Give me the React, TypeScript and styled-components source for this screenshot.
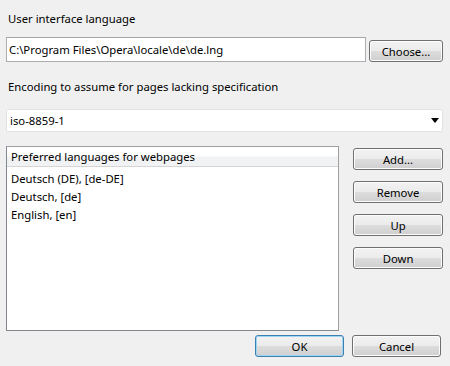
import React from "react";
import styled, { createGlobalStyle } from "styled-components";

const Global = createGlobalStyle`
  html, body { margin: 0; padding: 0; background: #f0f0f0; }
  * { box-sizing: border-box; }
`;

const Dialog = styled.div`
  width: 450px;
  height: 366px;
  background: #f0f0f0;
  padding: 11px 7px 0 6px;
  font-family: "Segoe UI", "Noto Sans", "Open Sans", sans-serif;
  font-size: 11.3px;
  color: #000;
  display: flex;
  flex-direction: column;
  overflow: hidden;
`;

const Caption = styled.div<{ $gap: number }>`
  height: 16px;
  line-height: 16px;
  padding-left: 2px;
  margin-bottom: ${(p) => p.$gap}px;
`;

const Row = styled.div<{ $gap?: number }>`
  display: flex;
  align-items: flex-start;
  margin-bottom: ${(p) => p.$gap ?? 0}px;
`;

const TextField = styled.div`
  flex: 1;
  height: 25px;
  background: #fff;
  border: 1px solid #abadb3;
  border-top-color: #a3a5aa;
  padding: 0 3px 0 2px;
  line-height: 23px;
  white-space: nowrap;
  overflow: hidden;
`;

const Button = styled.button<{ $w: number; $default?: boolean }>`
  width: ${(p) => p.$w}px;
  height: 22px;
  padding: 0;
  font: inherit;
  color: #000;
  border-radius: 3px;
  border: 1px solid ${(p) => (p.$default ? "#3c7fb1" : "#707070")};
  background: linear-gradient(#f2f2f2 0%, #ebebeb 50%, #dddddd 51%, #cfcfcf 100%);
  box-shadow: inset 0 0 0 1px ${(p) => (p.$default ? "#9fd6f4" : "#fcfcfc")};
  line-height: 19px;
`;

const ChooseBtn = styled(Button)`
  margin-left: 3px;
  margin-top: 3px;
`;

const Select = styled.div`
  height: 23px;
  background: #fff;
  border: 1px solid #e3e3e3;
  border-radius: 2px;
  display: flex;
  align-items: center;
  justify-content: space-between;
  padding: 0 3px 0 3px;
  margin-bottom: 14px;
`;

const Arrow = styled.span`
  width: 0;
  height: 0;
  border-left: 4px solid transparent;
  border-right: 4px solid transparent;
  border-top: 5px solid #000;
`;

const ListBox = styled.div`
  width: 333px;
  height: 185px;
  background: #fff;
  border: 1px solid #828790;
  border-top-color: #a0a0a0;
  border-right-color: #a0a0a0;
`;

const ListHeader = styled.div`
  height: 20px;
  line-height: 19px;
  padding-left: 4px;
  background: linear-gradient(#ffffff 0%, #ffffff 45%, #f1f2f4 55%, #f1f2f4 100%);
  border-bottom: 1px solid #d5d5d5;
  margin-bottom: 3px;
`;

const ListItem = styled.div`
  height: 18px;
  line-height: 18px;
  padding-left: 4px;
`;

const SideButtons = styled.div`
  display: flex;
  flex-direction: column;
  gap: 11px;
  margin-left: 14px;
  margin-top: 2px;
`;

const Footer = styled.div`
  display: flex;
  justify-content: flex-end;
  gap: 8px;
  padding-right: 2px;
  margin-top: 4px;
`;

export default function App() {
  return (
    <>
      <Global />
      <Dialog>
        <Caption $gap={10}>User interface language</Caption>
        <Row $gap={17}>
          <TextField>C:\Program Files\Opera\locale\de\de.lng</TextField>
          <ChooseBtn $w={74}>Choose...</ChooseBtn>
        </Row>
        <Caption $gap={14}>Encoding to assume for pages lacking specification</Caption>
        <Select>
          <span>iso-8859-1</span>
          <Arrow />
        </Select>
        <Row>
          <ListBox>
            <ListHeader>Preferred languages for webpages</ListHeader>
            <ListItem>Deutsch (DE), [de-DE]</ListItem>
            <ListItem>Deutsch, [de]</ListItem>
            <ListItem>English, [en]</ListItem>
          </ListBox>
          <SideButtons>
            <Button $w={90}>Add...</Button>
            <Button $w={90}>Remove</Button>
            <Button $w={90}>Up</Button>
            <Button $w={90}>Down</Button>
          </SideButtons>
        </Row>
        <Footer>
          <Button $w={89} $default>OK</Button>
          <Button $w={89}>Cancel</Button>
        </Footer>
      </Dialog>
    </>
  );
}
